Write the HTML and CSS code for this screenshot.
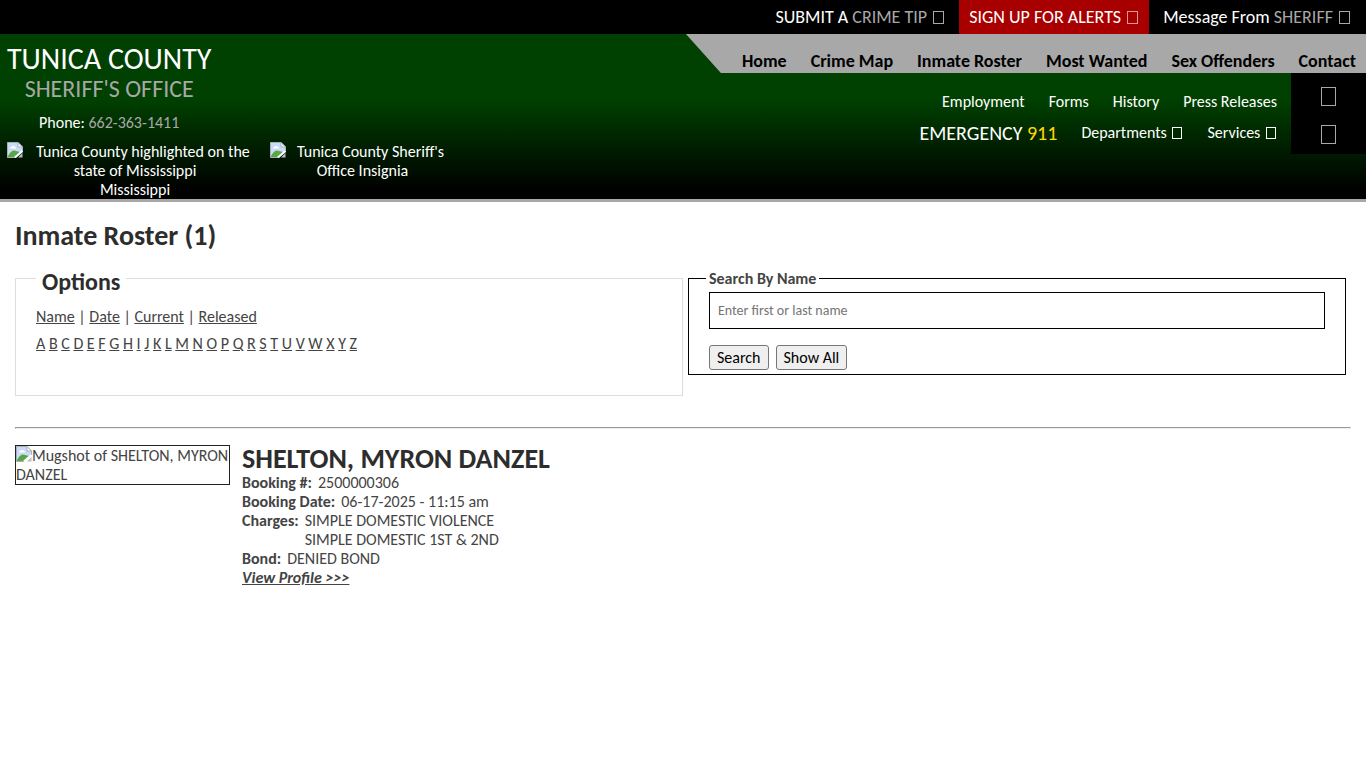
FILE: index.html
```html
<!DOCTYPE html>
<html lang="en">
<head>
  <meta charset="UTF-8">
  <meta name="viewport" content="width=device-width, initial-scale=1">
  <title>Inmate Roster - Tunica County Sheriff's Office</title>
  <link rel="stylesheet" href="styles.css">
</head>
<body>
  <svg width="0" height="0" class="sprite" aria-hidden="true">
    <symbol id="missing" viewBox="0 0 16 16">
      <path d="M.5.5H11L15.500 5V9L8 15.500H.5Z" fill="#c9dbf8" stroke="#a9b0b8"/>
      <path d="M11 .5V5H15.500Z" fill="#fff" stroke="#a9b0b8"/>
      <path d="M3 6.500Q3 4.500 5 4.500Q6 3 7.500 4.500Q9 4.500 9 6.500Z" fill="#fff"/>
      <path d="M1 14Q5 7 9 9L13 10L7 15H1Z" fill="#57a844"/>
      <path d="M15.500 9L8 15.500" stroke="#fff" stroke-width="2"/>
      <path d="M11 15.500H15.500V11Z" fill="#b9bec6"/>
    </symbol>
  </svg>

  <div class="topbar">
    <a href="#">SUBMIT A <span class="muted">CRIME TIP <i class="glyph"></i></span></a>
    <a href="#" class="alerts">SIGN UP FOR ALERTS <i class="glyph"></i></a>
    <a href="#">Message From <span class="muted">SHERIFF <i class="glyph"></i></span></a>
  </div>

  <header class="header">
    <div class="brand">
      <div class="brand-name">
        <div class="county">TUNICA COUNTY</div>
        <div class="office">SHERIFF'S OFFICE</div>
        <div class="phone">Phone: <span class="muted">662-363-1411</span></div>
      </div>
      <div class="brand-images">
        <div class="state"><svg class="missing"><use href="#missing"/></svg>Tunica County highlighted on the state of Mississippi<br>Mississippi</div>
        <div class="insignia"><svg class="missing"><use href="#missing"/></svg>Tunica County Sheriff's Office Insignia</div>
      </div>
    </div>

    <div class="menus">
      <nav class="main-nav">
        <a href="#">Home</a>
        <a href="#">Crime Map</a>
        <a href="#">Inmate Roster</a>
        <a href="#">Most Wanted</a>
        <a href="#">Sex Offenders</a>
        <a href="#">Contact</a>
      </nav>
      <div class="sub-row">
        <nav class="sub-nav">
          <div class="links">
            <a href="#">Employment</a>
            <a href="#">Forms</a>
            <a href="#">History</a>
            <a href="#">Press Releases</a>
          </div>
          <div class="links">
            <span class="emergency">EMERGENCY <span class="gold">911</span></span>
            <a href="#">Departments <i class="glyph"></i></a>
            <a href="#">Services <i class="glyph"></i></a>
          </div>
        </nav>
        <div class="social">
          <a href="#" aria-label="Facebook"><i class="glyph"></i></a>
          <a href="#" aria-label="Twitter"><i class="glyph"></i></a>
        </div>
      </div>
    </div>
  </header>

  <main class="content">
    <h1>Inmate Roster (1)</h1>
    <div class="filters">
      <fieldset class="options">
        <legend>Options</legend>
        <p><a href="#">Name</a> | <a href="#">Date</a> | <a href="#">Current</a> | <a href="#">Released</a></p>
        <p>
          <a href="#">A</a> <a href="#">B</a> <a href="#">C</a> <a href="#">D</a> <a href="#">E</a> <a href="#">F</a> <a href="#">G</a>
          <a href="#">H</a> <a href="#">I</a> <a href="#">J</a> <a href="#">K</a> <a href="#">L</a> <a href="#">M</a> <a href="#">N</a>
          <a href="#">O</a> <a href="#">P</a> <a href="#">Q</a> <a href="#">R</a> <a href="#">S</a> <a href="#">T</a> <a href="#">U</a>
          <a href="#">V</a> <a href="#">W</a> <a href="#">X</a> <a href="#">Y</a> <a href="#">Z</a>
        </p>
      </fieldset>
      <form class="search-form">
        <fieldset class="search">
          <legend><label for="name">Search By Name</label></legend>
          <input type="text" id="name" placeholder="Enter first or last name">
          <div class="buttons">
            <button type="submit">Search</button>
            <button type="button">Show All</button>
          </div>
        </fieldset>
      </form>
    </div>
    <hr>
    <article class="inmate">
      <div class="mugshot"><svg class="missing"><use href="#missing"/></svg>Mugshot of SHELTON, MYRON DANZEL</div>
      <div class="details">
        <h2>SHELTON, MYRON DANZEL</h2>
        <div class="row"><b>Booking #:</b><span>2500000306</span></div>
        <div class="row"><b>Booking Date:</b><span>06-17-2025 - 11:15 am</span></div>
        <div class="row"><b>Charges:</b><span>SIMPLE DOMESTIC VIOLENCE<br>SIMPLE DOMESTIC 1ST &amp; 2ND</span></div>
        <div class="row"><b>Bond:</b><span>DENIED BOND</span></div>
        <a href="#" class="profile">View Profile &gt;&gt;&gt;</a>
      </div>
    </article>
  </main>
</body>
</html>
```
FILE: styles.css
```css
* {
  box-sizing: border-box;
}
body {
  margin: 0;
  font-family: Calibri, Carlito, Lato, sans-serif;
  font-size: 16px;
  line-height: 19px;
  color: #444;
  background: #fff;
}
a {
  color: inherit;
}
.sprite {
  position: absolute;
}
.muted {
  color: #a8a8a8;
}
.missing {
  width: 16px;
  height: 16px;
}
/* empty box where the icon font has no glyph */
.glyph {
  display: inline-block;
  width: 10px;
  height: 12px;
  margin: 0 1px 0 2px;
  border: 1px solid currentColor;
  vertical-align: -1px;
}

.topbar {
  display: flex;
  justify-content: flex-end;
  gap: 4px;
  padding-right: 5px;
  background: #000;
  color: #fff;
  font-size: 18px;
  line-height: 34px;
}
.topbar a {
  padding: 0 10px;
  text-decoration: none;
}
.topbar .glyph {
  width: 11px;
  height: 13px;
}
.topbar .alerts {
  background: #a80000;
}
.topbar .alerts .glyph {
  opacity: .6;
}

.header {
  display: flex;
  justify-content: space-between;
  align-items: flex-start;
  background: linear-gradient(#004000 40%, #000 95%);
  border-bottom: 3px solid #a8a8a8;
  color: #fff;
}
.header a {
  text-decoration: none;
}
.brand {
  padding: 10px 0 0 7px;
}
.brand-name {
  display: inline-block;
  text-align: center;
  vertical-align: top;
}
.county {
  font-size: 30px;
  line-height: 30px;
}
.office {
  font-size: 24px;
  line-height: 30px;
  color: #a8a8a8;
}
.phone {
  padding-top: 9px;
}
.brand-images {
  display: flex;
  gap: 7px;
  padding-top: 10px;
  text-align: center;
}
.brand-images .missing {
  float: left;
}
.state {
  width: 256px;
}
.insignia {
  width: 185px;
}

.main-nav {
  display: flex;
  justify-content: flex-end;
  gap: 24px;
  height: 39px;
  padding: 16px 10px 0 56px;
  background: #a8a8a8;
  clip-path: polygon(0 0, 100% 0, 100% 100%, 35px 100%);
  color: #000;
  font-size: 18px;
  font-weight: bold;
  line-height: 22px;
}
.sub-row {
  display: flex;
  justify-content: flex-end;
  gap: 14px;
}
.sub-nav {
  display: flex;
  flex-direction: column;
  gap: 7px;
  padding-top: 17px;
}
.links {
  display: flex;
  justify-content: flex-end;
  align-items: center;
  gap: 24px;
  line-height: 24px;
}
.emergency {
  font-size: 20px;
}
.gold {
  color: #ffd700;
}
.social {
  display: flex;
  flex-direction: column;
  align-items: center;
  gap: 19px;
  width: 75px;
  height: 81px;
  padding-top: 14px;
  background: #000;
  color: #a8a8a8;
}
.social a {
  display: flex;
}
.social .glyph {
  width: 15px;
  height: 19px;
  margin: 0;
}

.content {
  padding: 17px 15px;
}
h1, h2, legend {
  color: #2d2d2d;
}
h1 {
  margin: 0 0 13px;
  font-size: 28px;
  line-height: 34px;
}
.filters {
  display: flex;
  align-items: flex-start;
  gap: 5px;
}
fieldset {
  margin: 0;
  min-width: 0;
}
.options {
  flex: 0 0 50%;
  height: 130px;
  padding: 0 20px;
  border: 1px solid #ddd;
}
.options legend {
  padding: 8px 6px 0;
  font-size: 24px;
  font-weight: bold;
  line-height: 16px;
}
.options p {
  margin: 0 0 8px;
}
.options legend + p {
  margin-top: 17px;
}
.search-form {
  flex: 1;
  margin: 3px 5px 0 0;
}
.search {
  padding: 0 20px 4px;
  border: 1px solid #000;
}
.search legend {
  padding: 0 3px;
  margin-left: -3px;
  color: #444;
  font-weight: bold;
}
.search input {
  display: block;
  width: 100%;
  height: 37px;
  margin-top: 4px;
  padding: 0 8px;
  border: 1px solid #000;
  font: 14px Calibri, Carlito, Lato, sans-serif;
}
.buttons {
  display: flex;
  gap: 7px;
  padding-top: 16px;
}
button {
  height: 25px;
  padding: 0 7px;
  border: 1px solid #767676;
  border-radius: 3px;
  background: #efefef;
  color: #000;
  font: inherit;
}
hr {
  margin: 31px 0 16px;
}

.inmate {
  display: flex;
  align-items: flex-start;
  gap: 12px;
}
.mugshot {
  width: 215px;
  border: 1px solid #222;
}
.mugshot .missing {
  float: left;
}
h2 {
  margin: 0;
  font-size: 28px;
  line-height: 28px;
}
.row {
  display: flex;
  gap: 6px;
}
.profile {
  font-weight: bold;
  font-style: italic;
}
```
